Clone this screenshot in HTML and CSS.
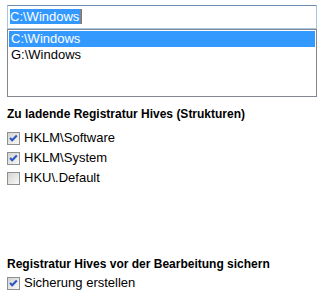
FILE: index.html
```html
<!DOCTYPE html>
<html lang="de">

<head>
  <meta charset="UTF-8">
  <title>Hives</title>
  <link rel="stylesheet" href="styles.css">
</head>

<body>
  <div class="panel">

    <div class="combo-edit"><span class="sel">C:\Windows</span></div>
    <div class="combo-list">
      <div class="item active">C:\Windows</div>
      <div class="item">G:\Windows</div>
    </div>

    <h2 class="heading first">Zu ladende Registratur Hives (Strukturen)</h2>
    <label class="check">
      <svg class="box" width="13" height="13" viewBox="0 0 13 13">
        <defs>
          <linearGradient id="g1" x1="0" y1="0" x2="1" y2="1">
            <stop offset="0" stop-color="#d2d2cf" />
            <stop offset="1" stop-color="#fafafa" />
          </linearGradient>
        </defs>
        <rect x="0.5" y="0.5" width="12" height="12" fill="url(#g1)" stroke="#8e8f8f" />
        <polyline points="3,6 5.2,8.3 9.8,3.5" fill="none" stroke="#2b55c4" stroke-width="2" />
      </svg>
      <span>HKLM\Software</span>
    </label>
    <label class="check">
      <svg class="box" width="13" height="13" viewBox="0 0 13 13">
        <rect x="0.5" y="0.5" width="12" height="12" fill="url(#g1)" stroke="#8e8f8f" />
        <polyline points="3,6 5.2,8.3 9.8,3.5" fill="none" stroke="#2b55c4" stroke-width="2" />
      </svg>
      <span>HKLM\System</span>
    </label>
    <label class="check">
      <svg class="box" width="13" height="13" viewBox="0 0 13 13">
        <rect x="0.5" y="0.5" width="12" height="12" fill="url(#g1)" stroke="#8e8f8f" />
      </svg>
      <span>HKU\.Default</span>
    </label>

    <h2 class="heading second">Registratur Hives vor der Bearbeitung sichern</h2>
    <label class="check">
      <svg class="box" width="13" height="13" viewBox="0 0 13 13">
        <rect x="0.5" y="0.5" width="12" height="12" fill="url(#g1)" stroke="#8e8f8f" />
        <polyline points="3,6 5.2,8.3 9.8,3.5" fill="none" stroke="#2b55c4" stroke-width="2" />
      </svg>
      <span>Sicherung erstellen</span>
    </label>

  </div>
</body>

</html>
```

FILE: styles.css
```css
body {
  margin: 0;
  background: #ffffff;
  color: #000000;
  font-family: "Liberation Sans", Arial, sans-serif;
  font-size: 13px;
}

.panel {
  width: 324px;
  height: 296px;
  padding: 5px 0 0 7px;
  box-sizing: border-box;
  overflow: hidden;
}

.combo-edit {
  width: 310px;
  height: 24px;
  box-sizing: border-box;
  border: 1px solid #a6c6e6;
  border-top-color: #6f8fae;
  padding: 3px 2px 0;
}

.sel {
  display: inline-block;
  height: 15px;
  line-height: 15px;
  padding-right: 2px;
  background: #3399ff;
  color: #ffffff;
  border-right: 1px solid #cc6600;
}

.combo-list {
  width: 310px;
  height: 68px;
  box-sizing: border-box;
  border: 1px solid #828790;
  padding: 1px;
}

.item {
  height: 16px;
  line-height: 16px;
  padding-left: 2px;
}

.item.active {
  background: #3399ff;
  color: #ffffff;
}

.heading {
  margin: 0;
  font-size: 12px;
  font-weight: bold;
  line-height: 16px;
  height: 16px;
}

.heading.first {
  margin-top: 9px;
  margin-bottom: 7px;
}

.heading.second {
  margin-top: 67px;
  margin-bottom: 2px;
}

.check {
  display: flex;
  align-items: flex-start;
  height: 20px;
  gap: 4px;
}

.check .box {
  margin-top: 3px;
  flex: none;
}

.check span {
  line-height: 18px;
}
```
